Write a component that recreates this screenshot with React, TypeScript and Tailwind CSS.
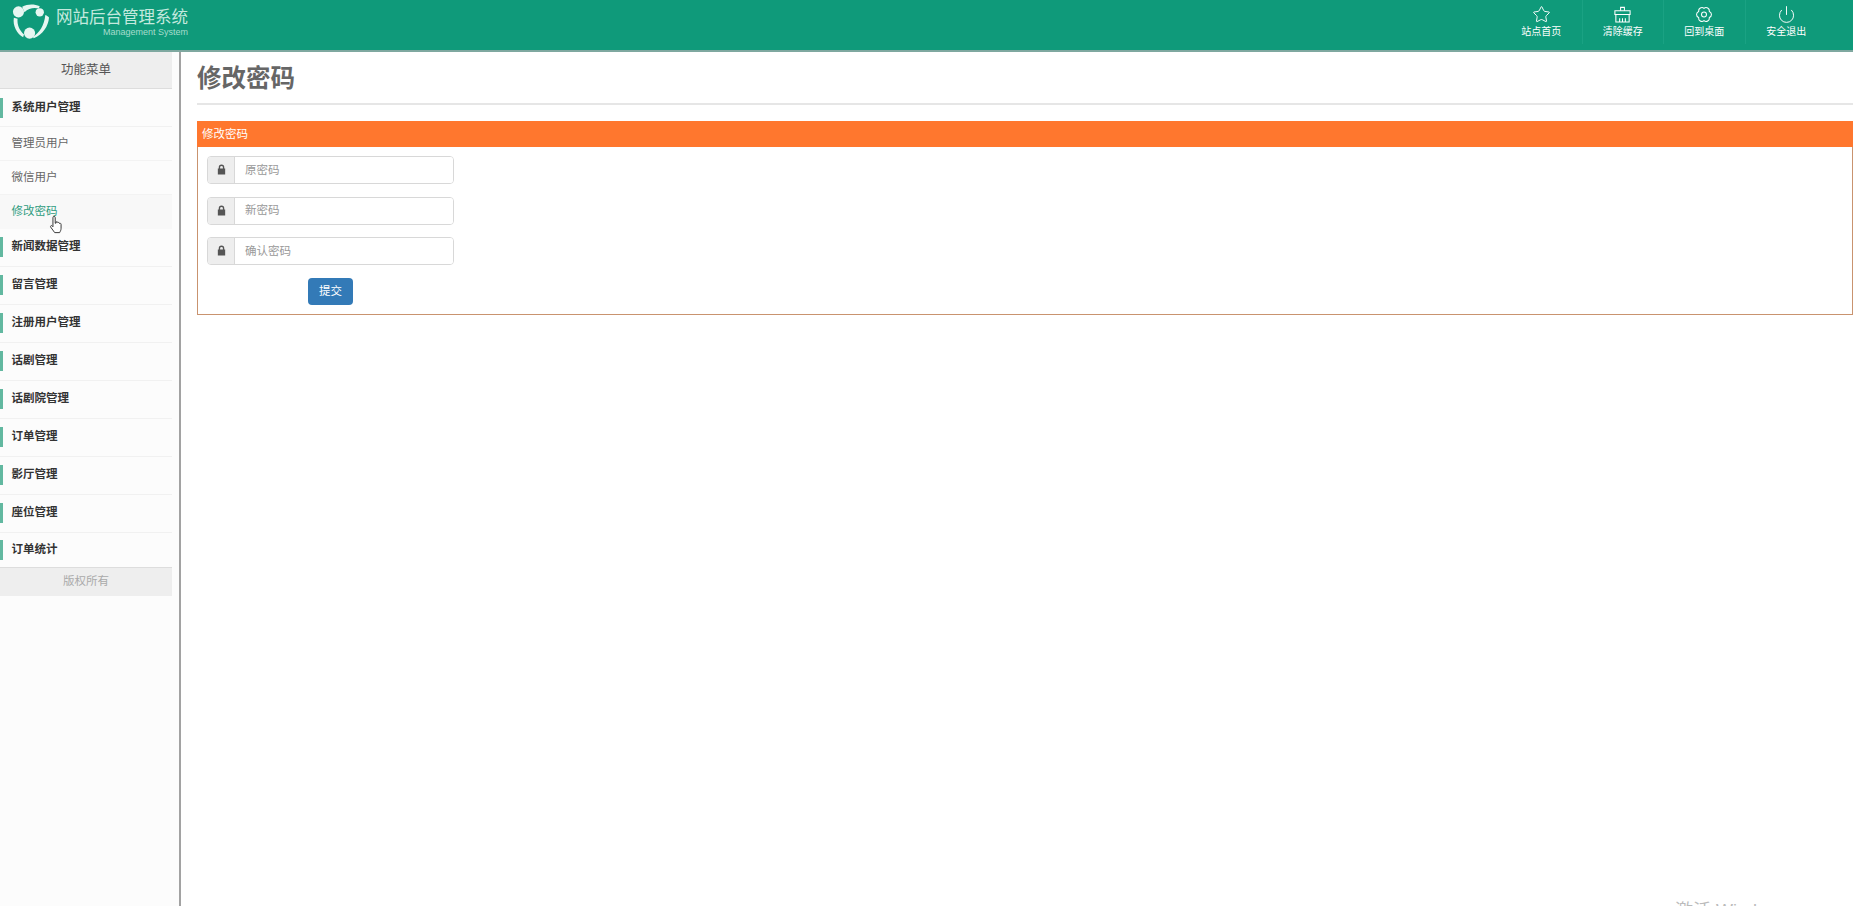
import { Star, Power } from "lucide-react";
import type { ReactNode } from "react";

const navItems: { label: string; icon: ReactNode }[] = [
  { label: "站点首页", icon: <Star className="w-[19px] h-[19px]" strokeWidth={1.2} /> },
  {
    label: "清除缓存",
    icon: (
      <svg viewBox="0 0 20 20" className="w-[19px] h-[19px]" fill="none" stroke="currentColor" strokeWidth="1.1">
        <path d="M8 6V2.500h4V6" />
        <path d="M2 6h16v4H2z" />
        <path d="M3 10v8h14v-8M7 14v4M10 14v4M13 14v4" />
      </svg>
    ),
  },
  {
    label: "回到桌面",
    icon: (
      <svg viewBox="0 0 20 20" className="w-[20px] h-[19px]" fill="none" stroke="currentColor" strokeWidth="1.1">
        <path d="M10 3.500A3.500 3.500 0 0 1 15.630 6.750 3.500 3.500 0 0 1 15.630 13.250 3.500 3.500 0 0 1 10 16.500 3.500 3.500 0 0 1 4.370 13.250 3.500 3.500 0 0 1 4.370 6.750 3.500 3.500 0 0 1 10 3.500z" />
        <circle cx="10" cy="10" r="2.600" />
      </svg>
    ),
  },
  { label: "安全退出", icon: <Power className="w-[19px] h-[19px]" strokeWidth={1.2} /> },
];

const groupsAfter = ["新闻数据管理", "留言管理", "注册用户管理", "话剧管理", "话剧院管理", "订单管理", "影厅管理", "座位管理"];

function Group({ label, short }: { label: string; short?: boolean }) {
  return (
    <div className={`flex items-center ${short ? "h-[34px]" : "h-[38px] border-b border-[#f1f1f1]"}`}>
      <span className="w-[3px] h-[20px] bg-[#62b8a0]" />
      <span className="ml-[8.500px] text-[11.500px] font-bold text-[#333]">{label}</span>
    </div>
  );
}

function SubItem({ label, active }: { label: string; active?: boolean }) {
  return (
    <div className={`flex items-center pl-[11.500px] text-[11.500px] ${active ? "h-[33.500px] text-[#2f9c80] bg-[#f8f8f8]" : "h-[34px] text-[#666] border-b border-[#f3f3f3]"}`}>
      {label}
    </div>
  );
}

function PasswordField({ placeholder }: { placeholder: string }) {
  return (
    <div className="flex w-[247px] h-[28px] border border-[#d8d8d8] rounded-[4px] overflow-hidden">
      <div className="w-[27px] bg-[#eee] border-r border-[#d8d8d8] flex items-center justify-center pb-[1px]">
        <svg viewBox="0 0 12 12" className="w-[11px] h-[11px]" fill="#555">
          <path d="M3 5V3.600a3 3 0 0 1 6 0V5h1v6.500H2V5zm1.500 0h3V3.600a1.500 1.500 0 0 0-3 0z" />
        </svg>
      </div>
      <div className="flex-1 bg-white flex items-center pl-[10px] pt-[1px] text-[11.500px] text-[#999]">{placeholder}</div>
    </div>
  );
}

export default function App() {
  return (
    <div className="relative w-full h-[906px] overflow-hidden bg-white font-['Liberation_Sans','Noto_Sans_CJK_SC',sans-serif]">
      {/* Top bar */}
      <header className="h-[52px] bg-[#0f9a7a] border-b-2 border-b-[#7fa8a0] flex items-start justify-between">
        <div className="flex items-center pl-[12px] pt-[3px]">
          <svg viewBox="0 0 40 40" className="w-[37px] h-[38px]" fill="#e6f6f1">
            <circle cx="7" cy="9" r="6" />
            <circle cx="30" cy="9.500" r="4.500" />
            <circle cx="19" cy="32" r="6" />
            <path d="M11 3.500C17 .5 24 .5 30 3l-1 2.500C24 4 18 5 13.500 9.500zM2 15.500l4 1c-.5 6 1.500 12 7 17l-1 3C5.500 33 .5 24 2 15.500zM36 12.500c2 1 3.200 1.500 4 2.500-.5 9-7 19-16.500 22.500l-1-1.500c7-4 12.500-12 13.500-23.500z" />
          </svg>
          <div className="ml-[7px] flex flex-col items-end">
            <span className="text-[16.500px] leading-[20px] text-[#c4e9de]">网站后台管理系统</span>
            <span className="text-[9px] leading-[11px] text-[#a6dccd]">Management System</span>
          </div>
        </div>
        <nav className="flex pr-[26px]">
          {navItems.map((item, index) => (
            <div key={item.label} className={`w-[81.500px] h-[44px] pt-[5px] flex flex-col items-center text-white ${index < 3 ? "border-r border-[#1aa283]" : ""}`}>
              {item.icon}
              <span className="mt-[1px] text-[10px] leading-[14px]">{item.label}</span>
            </div>
          ))}
        </nav>
      </header>

      <div className="flex h-[854px]">
        {/* Sidebar */}
        <aside className="w-[181px] shrink-0 border-r-2 border-[#a2a2a2] bg-[#fcfcfc]">
          <div className="w-[172px]">
            <div className="h-[37px] bg-[#eee] border-b border-[#ddd] flex items-center justify-center text-[12.500px] text-[#555]">功能菜单</div>
            <Group label="系统用户管理" />
            <SubItem label="管理员用户" />
            <SubItem label="微信用户" />
            <SubItem label="修改密码" active />
            {groupsAfter.map((label) => (
              <Group key={label} label={label} />
            ))}
            <Group label="订单统计" short />
            <div className="h-[29px] bg-[#eee] border-t border-[#ddd] flex items-center justify-center text-[11.500px] text-[#aaa]">版权所有</div>
          </div>
        </aside>

        {/* Content */}
        <main className="flex-1 pl-[16px]">
          <h1 className="h-[53px] border-b-2 border-[#e6e6e6] pt-[9px] text-[24.500px] leading-[36px] font-bold text-[#666]">修改密码</h1>
          <section className="mt-[16px] border border-[#c9936f] border-t-0">
            <div className="h-[26px] -mx-px bg-[#ff772e] flex items-center pl-[5px] pt-[1px] text-[11.500px] text-white">修改密码</div>
            <div className="px-[9px] pt-[9px] pb-[9px] w-[300px]">
              <div className="flex flex-col gap-[12.500px]">
                <PasswordField placeholder="原密码" />
                <PasswordField placeholder="新密码" />
                <PasswordField placeholder="确认密码" />
              </div>
              <button className="block mt-[13px] ml-[101px] w-[45px] h-[27px] rounded-[4px] bg-[#337ab7] text-[11.500px] text-white">提交</button>
            </div>
          </section>
        </main>
      </div>

      {/* Mouse cursor in the capture */}
      <svg viewBox="0 0 16 22" className="absolute left-[49px] top-[215px] w-[14px] h-[20px]" fill="#fff" stroke="#333" strokeWidth="1.1">
        <path d="M4.500 2.500a1.300 1.300 0 0 1 2.600 0V9l1-.2V7.500c1-.6 2 0 2 .8 1-.5 1.900 0 1.900.9 1-.4 1.800.1 1.800 1v4.500c0 2.500-1 3.500-1.600 5H6.500L2 13.500c-.8-1.200.6-2.400 1.500-1.500l1 1z" />
      </svg>

      {/* Watermark cut off by the bottom edge */}
      <span className="absolute left-[1675px] top-[899px] text-[18px] leading-[24px] text-[#bbb]">激活 Windows</span>
    </div>
  );
}
